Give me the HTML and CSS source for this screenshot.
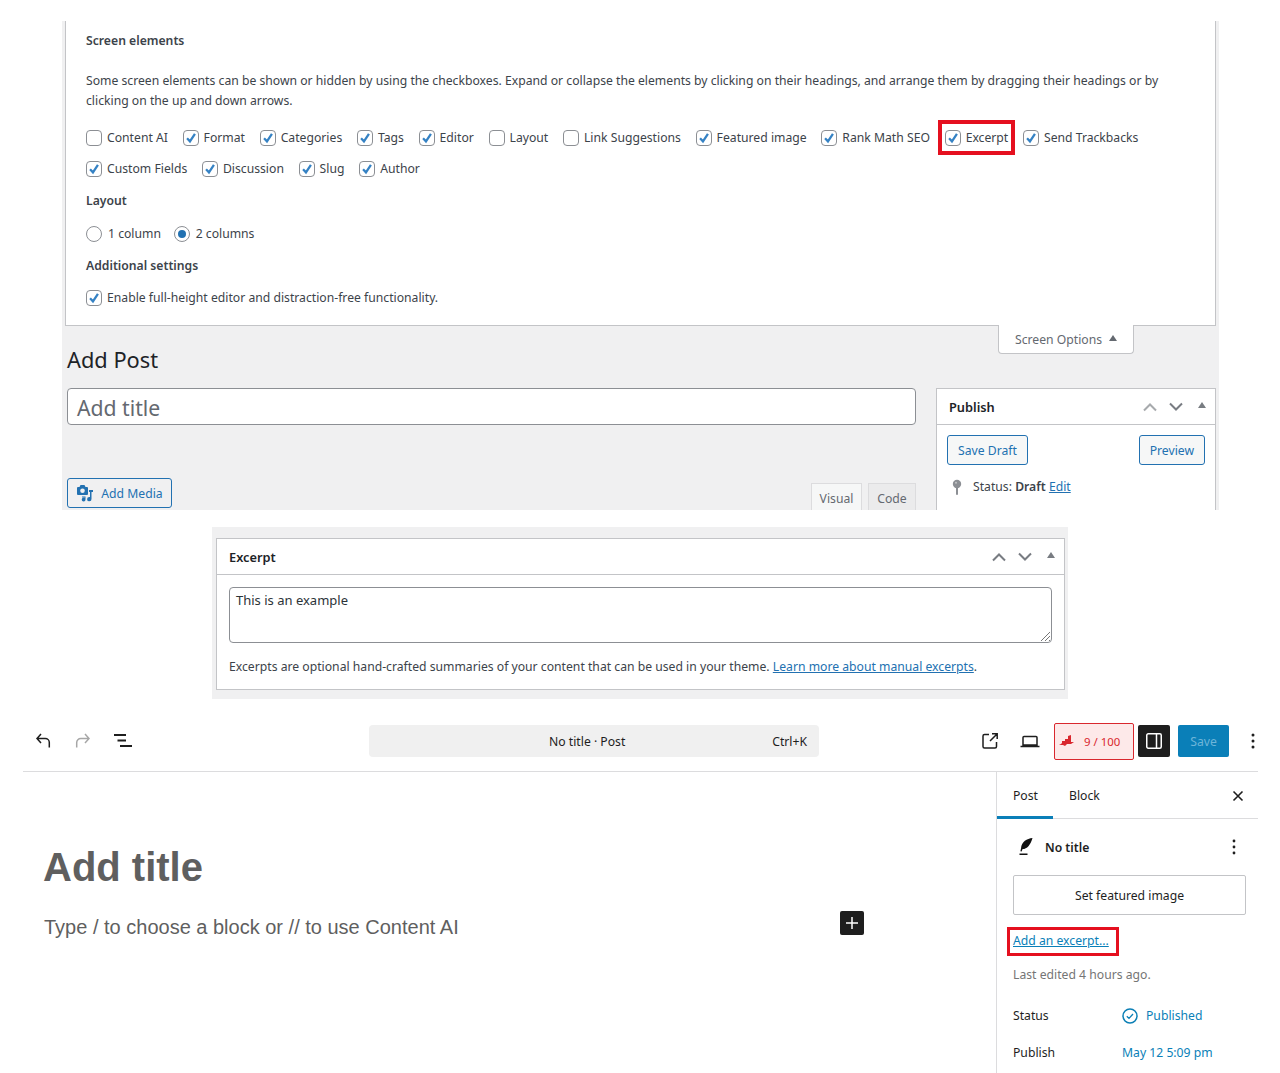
FILE: index.html
```html
<!DOCTYPE html>
<html lang="en">
<head>
<meta charset="utf-8">
<title>Add Post</title>
<link rel="stylesheet" href="styles.css">
</head>
<body>
<svg class="sprite" aria-hidden="true"><defs>
<symbol id="chk" viewBox="0 0 16 16"><path d="M3.500 8.300 6.800 11.800 12.500 3.200" fill="none" stroke="#3582c4" stroke-width="2.600"/></symbol>
<symbol id="up" viewBox="0 0 16 10"><path d="M2 8.500 8 2.500 14 8.500" fill="none" stroke="currentColor" stroke-width="2"/></symbol>
<symbol id="down" viewBox="0 0 16 10"><path d="M2 1.500 8 7.500 14 1.500" fill="none" stroke="currentColor" stroke-width="2"/></symbol>
</defs></svg>

<section class="shot-options">
  <div class="options-panel">
    <h5 class="opt-head opt-first">Screen elements</h5>
    <p class="opt-desc">Some screen elements can be shown or hidden by using the checkboxes. Expand or collapse the elements by clicking on their headings, and arrange them by dragging their headings or by clicking on the up and down arrows.</p>
    <div class="check-row">
      <label class="opt"><span class="cb"></span>Content AI</label>
      <label class="opt"><span class="cb"><svg><use href="#chk"/></svg></span>Format</label>
      <label class="opt"><span class="cb"><svg><use href="#chk"/></svg></span>Categories</label>
      <label class="opt"><span class="cb"><svg><use href="#chk"/></svg></span>Tags</label>
      <label class="opt"><span class="cb"><svg><use href="#chk"/></svg></span>Editor</label>
      <label class="opt"><span class="cb"></span>Layout</label>
      <label class="opt"><span class="cb"></span>Link Suggestions</label>
      <label class="opt"><span class="cb"><svg><use href="#chk"/></svg></span>Featured image</label>
      <label class="opt"><span class="cb"><svg><use href="#chk"/></svg></span>Rank Math SEO</label>
      <label class="opt opt-marked"><span class="cb"><svg><use href="#chk"/></svg></span>Excerpt</label>
      <label class="opt"><span class="cb"><svg><use href="#chk"/></svg></span>Send Trackbacks</label>
    </div>
    <div class="check-row">
      <label class="opt"><span class="cb"><svg><use href="#chk"/></svg></span>Custom Fields</label>
      <label class="opt"><span class="cb"><svg><use href="#chk"/></svg></span>Discussion</label>
      <label class="opt"><span class="cb"><svg><use href="#chk"/></svg></span>Slug</label>
      <label class="opt"><span class="cb"><svg><use href="#chk"/></svg></span>Author</label>
    </div>
    <h5 class="opt-head opt-layout">Layout</h5>
    <div class="check-row radio-row">
      <label class="opt"><span class="rd"></span>1 column</label>
      <label class="opt"><span class="rd rd-on"></span>2 columns</label>
    </div>
    <h5 class="opt-head opt-add">Additional settings</h5>
    <div class="check-row last-row">
      <label class="opt"><span class="cb"><svg><use href="#chk"/></svg></span>Enable full-height editor and distraction-free functionality.</label>
    </div>
  </div>
  <div class="screen-tab">Screen Options <i class="tri"></i></div>
  <h1 class="page-title">Add Post</h1>
  <div class="classic-cols">
    <div class="classic-main">
      <div class="title-input">Add title</div>
      <div class="media-row">
        <button class="wp-btn media-btn">
          <svg width="18" height="18" viewBox="0 0 18 18"><path fill="#2271b1" d="M1 4a1 1 0 0 1 1-1h1.500l1-2h4l1 2H11a1 1 0 0 1 1 1v6a1 1 0 0 1-1 1H2a1 1 0 0 1-1-1z"/><circle cx="6.500" cy="6.800" r="2.300" fill="#f0f0f1"/><path fill="#2271b1" d="M13 6h4v2h-1.500v7a2.200 2.200 0 1 1-2.200-2.100H14V8h-1zM6 12.500h3.500v3a1.900 1.900 0 1 1-2-1.800H9v-.2H6z"/></svg>
          Add Media
        </button>
        <div class="mode-tabs"><span class="mode-tab mode-on">Visual</span><span class="mode-tab">Code</span></div>
      </div>
    </div>
    <aside class="publish-box">
      <header class="box-head"><h2>Publish</h2>
        <div class="box-ctrl"><svg class="ctl ctl-dim"><use href="#up"/></svg><svg class="ctl"><use href="#down"/></svg><i class="tri tri-box"></i></div>
      </header>
      <div class="publish-actions"><button class="wp-btn light">Save Draft</button><button class="wp-btn light">Preview</button></div>
      <div class="publish-status">
        <svg width="10" height="16" viewBox="0 0 10 16"><circle cx="5" cy="5" r="4.200" fill="#8c8f94"/><rect x="4" y="7" width="2" height="9" rx="1" fill="#8c8f94"/><circle cx="4" cy="3.800" r="1" fill="#c3c4c7"/></svg>
        <span>Status: <b>Draft</b> <a href="#">Edit</a></span>
      </div>
    </aside>
  </div>
</section>

<section class="shot-excerpt">
  <div class="excerpt-box">
    <header class="box-head"><h2>Excerpt</h2>
      <div class="box-ctrl"><svg class="ctl"><use href="#up"/></svg><svg class="ctl"><use href="#down"/></svg><i class="tri tri-box"></i></div>
    </header>
    <div class="excerpt-body">
      <div class="excerpt-area">This is an example
        <svg class="grip" width="12" height="12" viewBox="0 0 12 12"><path d="M11 2 2 11M11 6 6 11M11 10 10 11" stroke="#777" fill="none"/></svg>
      </div>
      <p class="excerpt-note">Excerpts are optional hand-crafted summaries of your content that can be used in your theme. <a href="#">Learn more about manual excerpts</a>.</p>
    </div>
  </div>
</section>

<section class="shot-gutenberg">
  <header class="gb-bar">
    <div class="gb-left">
      <svg width="24" height="24" viewBox="0 0 24 24"><path d="M18.300 18.500v-5a4 4 0 0 0-4-4H6M10 5 6 9.500l4 4.500" fill="none" stroke="#1e1e1e" stroke-width="1.500"/></svg>
      <svg width="24" height="24" viewBox="0 0 24 24"><path d="M5.700 18.500v-5a4 4 0 0 1 4-4H18M14 5l4 4.500-4 4.500" fill="none" stroke="#a7a7a7" stroke-width="1.500"/></svg>
      <svg width="24" height="24" viewBox="0 0 24 24"><path d="M3 6h12M6.500 11.500H15M9 17h12" fill="none" stroke="#1e1e1e" stroke-width="1.800"/></svg>
    </div>
    <div class="gb-search"><span class="gb-doc">No title · Post</span><span class="gb-key">Ctrl+K</span></div>
    <div class="gb-right">
      <svg class="gb-ext" width="24" height="24" viewBox="0 0 24 24"><path d="M11 5.500H6.500a1.500 1.500 0 0 0-1.500 1.500v10.500a1.500 1.500 0 0 0 1.500 1.500H17a1.500 1.500 0 0 0 1.500-1.500V13M12 12l7-7M14 4.800h5.200V10" fill="none" stroke="#1e1e1e" stroke-width="1.500"/></svg>
      <svg class="gb-lap" width="24" height="24" viewBox="0 0 24 24"><path d="M6 7.500h12a1 1 0 0 1 1 1V16H5V8.500a1 1 0 0 1 1-1ZM2.500 17.500h19" fill="none" stroke="#1e1e1e" stroke-width="1.500"/></svg>
      <div class="rank-box">
        <svg width="15" height="12" viewBox="0 0 15 12"><path fill="#d9272e" d="M3 6h3V4h3V1l3-1v7h3l-3 2H8l-2 2-2-1H0l2-1 1-1z"/></svg>
        <span>9 / 100</span>
      </div>
      <div class="gb-toggle"><svg width="18" height="18" viewBox="0 0 18 18"><rect x="1.750" y="1.750" width="14.500" height="14.500" rx="1.500" fill="none" stroke="#fff" stroke-width="1.500"/><path d="M11.500 2v14" stroke="#fff" stroke-width="1.500"/></svg></div>
      <button class="gb-save">Save</button>
      <svg class="gb-kebab" width="4" height="16" viewBox="0 0 4 16"><circle cx="2" cy="2" r="1.500"/><circle cx="2" cy="8" r="1.500"/><circle cx="2" cy="14" r="1.500"/></svg>
    </div>
  </header>
  <div class="gb-main">
    <main class="gb-editor">
      <h1 class="gb-title">Add title</h1>
      <div class="gb-para"><span>Type / to choose a block or // to use Content AI</span><span class="gb-plus"><svg width="14" height="14" viewBox="0 0 14 14"><path d="M7 1v12M1 7h12" stroke="#fff" stroke-width="1.500"/></svg></span></div>
    </main>
    <aside class="gb-side">
      <div class="side-tabs"><span class="side-tab side-on">Post</span><span class="side-tab">Block</span>
        <svg class="side-x" width="12" height="12" viewBox="0 0 12 12"><path d="M1.500 1.500l9 9M10.500 1.500l-9 9" stroke="#1e1e1e" stroke-width="1.600"/></svg></div>
      <div class="side-body">
        <div class="side-post">
          <svg width="16" height="18" viewBox="0 0 16 18"><path fill="#111" d="M14.500 0C9 .6 3.500 3.500 3 10.500l-.6 2.800 1.200.2 1-2.400C9 11 12.500 7 14.500 0Z"/><rect x="1.500" y="15.500" width="8" height="1.500" fill="#111"/></svg>
          <b>No title</b>
          <svg class="side-dots" width="4" height="16" viewBox="0 0 4 16"><circle cx="2" cy="2" r="1.400"/><circle cx="2" cy="8" r="1.400"/><circle cx="2" cy="14" r="1.400"/></svg>
        </div>
        <div class="side-featured">Set featured image</div>
        <div class="side-excerpt"><a href="#">Add an excerpt...</a></div>
        <p class="side-edited">Last edited 4 hours ago.</p>
        <div class="side-field field-status"><span>Status</span>
          <a class="side-val" href="#"><svg width="16" height="16" viewBox="0 0 16 16"><circle cx="8" cy="8" r="7" fill="none" stroke="#0b7fb5" stroke-width="1.500"/><path d="M4.800 8.200l2.200 2.200 4-4.400" fill="none" stroke="#0b7fb5" stroke-width="1.300"/></svg>Published</a></div>
        <div class="side-field field-publish"><span>Publish</span><a class="side-val" href="#">May 12 5:09 pm</a></div>
      </div>
    </aside>
  </div>
</section>
</body>
</html>
```
FILE: styles.css
```css
*, *::before, *::after { box-sizing: border-box; }
html, body { margin: 0; padding: 0; height: 1073px; overflow: hidden; background: #fff; }
body { font-family: "Noto Sans", "Open Sans", sans-serif; font-size: 12.200px; color: #3c434a; }
a { color: #2271b1; }
h1, h2, h5, p { margin: 0; }
button { font: inherit; cursor: pointer; }
.sprite { position: absolute; width: 0; height: 0; }

/* first screenshot */
.shot-options { position: relative; width: 1157px; height: 489px; margin: 21px 0 0 62px; background: #f0f0f1; overflow: hidden; }
.options-panel { width: 1151px; height: 305px; margin-left: 3px; padding: 0 20px; background: #fff; border: 1px solid #c3c4c7; border-top: 0; }
.opt-head { font-size: 12.200px; line-height: 20px; font-weight: 600; color: #3c434a; }
.opt-first { padding-top: 10px; height: 30px; }
.opt-desc { margin-top: 20px; width: 1100px; line-height: 20px; }
.check-row { display: flex; align-items: center; gap: 14.700px; height: 31px; }
.check-row:first-of-type { margin-top: 11px; }
.opt { position: relative; display: flex; align-items: center; gap: 5px; white-space: nowrap; }
.cb, .rd { flex: none; display: block; width: 16px; height: 16px; background: #fff; border: 1px solid #8c8f94; }
.cb { border-radius: 4px; }
.cb svg { display: block; width: 14px; height: 14px; }
.rd { border-radius: 50%; margin-right: 1px; display: flex; align-items: center; justify-content: center; }
.rd-on::after { content: ""; width: 8px; height: 8px; border-radius: 50%; background: #2271b1; }
.opt-marked::after { content: ""; position: absolute; left: -7px; right: -7px; top: -9px; bottom: -9px; border: 4px solid #e5101f; }
.opt-layout { margin-top: 7px; }
.radio-row { margin-top: 10px; height: 25px; }
.radio-row .opt { margin-right: -2px; }
.opt-add { margin-top: 10px; }
.last-row { margin-top: 6px; }
.screen-tab { position: absolute; top: 304px; left: 936px; width: 136px; height: 29px; display: flex; align-items: center; justify-content: center; gap: 7px; background: #fff; border: 1px solid #c3c4c7; border-top: 0; border-radius: 0 0 4px 4px; color: #646970; }
.tri { display: inline-block; width: 0; height: 0; border-left: 4px solid transparent; border-right: 4px solid transparent; border-bottom: 6px solid #646970; margin-top: -3px; }
.page-title { margin: 19px 0 0 5px; font-size: 21.800px; line-height: 29px; font-weight: 400; color: #1d2327; }
.classic-cols { display: flex; gap: 20px; margin: 14px 0 0 5px; }
.classic-main { width: 849px; }
.title-input { height: 37px; padding-left: 9px; font-size: 21.200px; line-height: 37px; color: #646970; background: #fff; border: 1px solid #8c8f94; border-radius: 4px; }
.media-row { display: flex; justify-content: space-between; align-items: flex-end; height: 85px; }
.wp-btn { display: inline-flex; align-items: center; justify-content: center; height: 30px; padding: 0 10px; color: #2271b1; background: #f6f7f7; border: 1px solid #2271b1; border-radius: 3px; }
.media-btn { gap: 7px; width: 105px; padding: 0; margin-bottom: 2px; background: #f0f0f1; }
.mode-tabs { display: flex; gap: 6px; }
.mode-tab { width: 48px; height: 27px; line-height: 30px; text-align: center; color: #646970; background: #ebebec; border: 1px solid #dcdcde; border-bottom: 0; }
.mode-on { width: 51px; background: #f6f7f7; }
.publish-box { width: 280px; height: 200px; background: #fff; border: 1px solid #c3c4c7; }
.box-head { display: flex; align-items: center; justify-content: space-between; height: 36px; padding: 0 12px; border-bottom: 1px solid #c3c4c7; }
.box-head h2 { font-size: 12.800px; font-weight: 600; color: #1d2327; }
.box-ctrl { display: flex; align-items: center; gap: 10px; margin-right: -3px; color: #787c82; }
.ctl { width: 16px; height: 10px; }
.ctl-dim { color: #a7aaad; }
.tri-box { margin: -3px 0 0 4px; border-bottom-color: #787c82; }
.publish-actions { display: flex; justify-content: space-between; padding: 10px 10px 0; }
.publish-status { display: flex; align-items: center; gap: 11px; margin: 13px 0 0 15px; }
.publish-status a { color: #2271b1; }
.publish-status b { font-weight: 600; }

/* second screenshot */
.shot-excerpt { width: 856px; height: 172px; margin: 17px 0 0 212px; padding: 11px 3px 0 4px; background: #f0f0f1; }
.excerpt-box { height: 152px; background: #fff; border: 1px solid #c3c4c7; }
.excerpt-body { padding: 12px 12px 0; }
.excerpt-area { position: relative; height: 56px; padding: 2px 6px; color: #2c3338; font-size: 13px; line-height: 20px; border: 1px solid #8c8f94; border-radius: 4px; }
.grip { position: absolute; right: 0; bottom: 0; }
.excerpt-note { margin-top: 14px; line-height: 20px; }

/* third screenshot */
.shot-gutenberg { width: 1235px; margin: 16px 0 0 23px; }
.gb-bar { position: relative; display: flex; align-items: center; height: 57px; padding-bottom: 4px; border-bottom: 1px solid #dcdcde; color: #1e1e1e; }
.gb-left { display: flex; gap: 16px; margin-left: 8px; }
.gb-left svg { display: block; }
.gb-search { display: flex; align-items: center; width: 450px; height: 32px; margin-left: 234px; padding: 0 12px 0 180px; background: #f0f0f0; border-radius: 4px; }
.gb-doc { flex: 1; color: #1e1e1e; }
.gb-key { color: #1e1e1e; }
.gb-right { display: flex; align-items: center; margin-left: 159px; }
.gb-ext { margin-right: 16px; }
.gb-lap { margin-right: 12px; }
.rank-box { display: flex; align-items: center; gap: 10px; width: 80px; height: 37px; padding-left: 4px; font-size: 11.400px; color: #d9272e; background: #fde9e9; border: 1px solid #d9272e; border-radius: 2px; margin-right: 4px; }
.gb-toggle { display: flex; align-items: center; justify-content: center; width: 32px; height: 32px; background: #1e1e1e; border-radius: 2px; margin-right: 8px; }
.gb-save { width: 51px; height: 32px; padding: 0; color: #6db5d9; background: #0a7fb8; border: 0; border-radius: 2px; }
.gb-kebab { margin-left: 22px; fill: #1e1e1e; }
.gb-main { display: flex; height: 301px; }
.gb-editor { width: 973px; padding: 0 21px; font-family: "Liberation Sans", Arial, sans-serif; color: #5f5f5f; }
.gb-title { margin: 70px 0 0 -1px; font-size: 40px; line-height: 50px; font-weight: 700; color: #5f5f5f; }
.gb-para { display: flex; justify-content: space-between; align-items: center; width: 820px; margin-top: 20px; font-size: 20px; line-height: 30px; }
.gb-plus { display: flex; align-items: center; justify-content: center; width: 24px; height: 24px; margin-top: -9px; background: #1e1e1e; border-radius: 2px; }
.gb-side { width: 262px; border-left: 1px solid #dcdcde; }
.side-tabs { position: relative; display: flex; height: 47px; border-bottom: 1px solid #dcdcde; }
.side-tab { display: flex; align-items: center; padding: 0 16px; color: #1e1e1e; height: 47px; }
.side-on { width: 56px; box-shadow: inset 0 -3px 0 #0a7fb8; }
.side-x { position: absolute; right: 14px; top: 18px; }
.side-body { padding: 0 12px 0 16px; color: #1e1e1e; }
.side-post { position: relative; display: flex; align-items: center; gap: 11px; height: 56px; padding-left: 5px; }
.side-post b { font-weight: 600; }
.side-dots { position: absolute; right: 10px; top: 20px; fill: #1e1e1e; }
.side-featured { display: flex; align-items: center; justify-content: center; width: 233px; height: 40px; border: 1px solid #c3c4c7; border-radius: 2px; }
.side-excerpt { position: relative; margin-top: 16px; line-height: 20px; width: 100px; }
.side-excerpt a { color: #0a7fb8; }
.side-excerpt::after { content: ""; position: absolute; left: -6px; top: -4px; width: 112px; height: 29px; border: 3px solid #e5101f; }
.side-edited { margin-top: 14px; line-height: 20px; color: #757575; }
.side-field { display: flex; align-items: center; }
.side-field > span { width: 109px; }
.field-status { margin-top: 22px; }
.field-publish { margin-top: 20px; }
.side-val { display: flex; align-items: center; gap: 8px; color: #0a7fb8; text-decoration: none; }
```
